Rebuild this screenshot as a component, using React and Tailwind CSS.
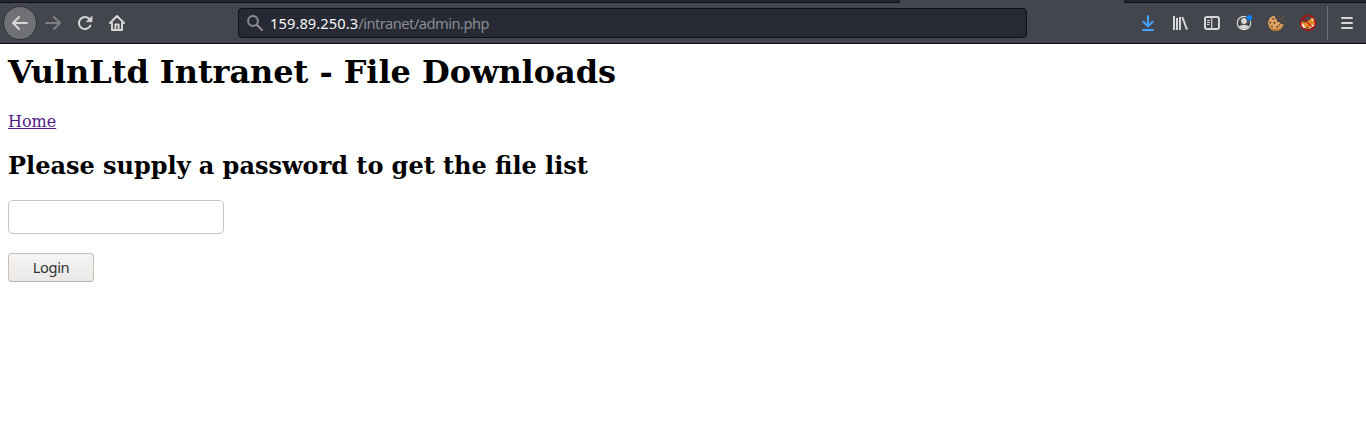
import React from "react";

function Icon({ children, className = "" }) {
  return (
    <svg
      viewBox="0 0 16 16"
      className={`block size-4 shrink-0 ${className}`}
      fill="none"
      stroke="currentColor"
      strokeWidth="2"
      strokeLinecap="round"
      strokeLinejoin="round"
      aria-hidden="true"
    >
      {children}
    </svg>
  );
}

function BackIcon() {
  return <Icon><path d="M15 8H1.5M7 2 1 8l6 6" /></Icon>;
}

function ForwardIcon() {
  return <Icon><path d="M1 8h13.5M9 2l6 6-6 6" /></Icon>;
}

function ReloadIcon() {
  return (
    <Icon>
      <path d="M12.6 4.2A6 6 0 1 0 13.4 10.6" />
      <path d="M15 1.5v5.2H9.8z" fill="currentColor" strokeWidth="0.8" />
    </Icon>
  );
}

function HomeIcon() {
  return (
    <Icon>
      <path d="M1 8l7-7 7 7M3 8v7h10V8" />
      <path d="M6.3 15V9.5h3.4V15" strokeWidth="1.8" />
      <path d="M8.4 12.2v.2" strokeWidth="1" />
    </Icon>
  );
}

function SearchIcon() {
  return (
    <Icon>
      <circle cx="6" cy="6" r="4.9" />
      <path d="M9.8 9.8 15 15" />
    </Icon>
  );
}

function DownloadIcon() {
  return (
    <Icon>
      <path d="M8 1v10M3.3 6.8 8 11.3l4.7-4.5M3 15h10" />
    </Icon>
  );
}

function LibraryIcon() {
  return (
    <Icon>
      <path d="M2 1v14M5 3v12M8 2v13" strokeWidth="2" strokeLinecap="butt" />
      <path d="M10.3 2 15 14.6" strokeWidth="2" strokeLinecap="butt" />
    </Icon>
  );
}

function SidebarIcon() {
  return (
    <Icon>
      <rect x="1" y="2" width="14" height="12" rx="2" />
      <path d="M7.7 2v12" strokeWidth="1.2" />
      <path d="M3 5.5h3M3 7.5h3M3 9.5h2.5" strokeWidth="1" strokeLinecap="butt" />
    </Icon>
  );
}

function AccountIcon() {
  return (
    <Icon>
      <circle cx="8" cy="8" r="6.7" strokeWidth="1.2" />
      <circle cx="8" cy="6" r="2.9" fill="currentColor" stroke="none" />
      <path d="M3 11.2q5-3 10 0A6 6 0 0 1 3 11.2Z" fill="currentColor" stroke="none" />
      <circle cx="13.3" cy="2.8" r="3.3" fill="#43464d" stroke="none" />
      <circle cx="13.4" cy="2.7" r="2.7" fill="#0a84ff" stroke="none" />
    </Icon>
  );
}

function CookieIcon() {
  return (
    <Icon>
      <g stroke="none">
        <path d="M6.8 .8C3 1.2 0 4.3 .2 8.5A7.5 7.5 0 0 0 15.5 9C14 10 12.1 9.4 11.9 7.5C9.7 7.7 8.2 6.3 8.7 4.3C7 4 6.2 2.4 6.8 .8Z" fill="#b87936" />
        <path d="M6.8 .8C3 1.2 0 4.3 .2 8.5Q1.5 14 7.5 14.3Q13 14.3 15.5 9C14 10 12.1 9.4 11.9 7.5C9.7 7.7 8.2 6.3 8.7 4.3C7 4 6.2 2.4 6.8 .8Z" fill="#dda463" />
        <g fill="#6b3e20">
          <circle cx="5.2" cy="4" r=".9" />
          <circle cx="2.3" cy="7.5" r=".9" />
          <circle cx="6.5" cy="7.8" r="1.1" />
          <circle cx="4" cy="11.3" r=".9" />
          <circle cx="9.3" cy="12" r="1" />
          <circle cx="11.3" cy="10" r=".8" />
        </g>
        <g fill="#805027">
          <rect x="10" y=".5" width="1.5" height="1.5" />
          <rect x="14" y="1" width="1.5" height="1.5" />
          <rect x="11.5" y="3.5" width="2" height="1.5" />
          <rect x="14.5" y="6.5" width="1.2" height="1" />
        </g>
      </g>
    </Icon>
  );
}

function FoxIcon() {
  return (
    <Icon>
      <g stroke="none">
        <path d="M1.5 6.2 5 7.5 9.5 5 11.5 2.8 14.5 3 15 9 12.5 12.5 8.5 14 4 13 1 10Z" fill="#e58a2b" />
        <path d="m1.3 8.5 2.7 1 1.5 3.5-2.500.1Q1 11 1.3 8.5ZM11 4l2.500-.5v3ZM11 10l4-.5q-1.500 3.200-5.500 4Z" fill="#f1e4cf" />
        <path d="m6.5 12.2 2.2-.4-.8 1.7Z" fill="#40352c" />
      </g>
      <circle cx="8" cy="8" r="7.4" stroke="#cc0000" strokeWidth="1.1" />
      <path d="m2.900 2.900 10.200 10.200" stroke="#cc0000" strokeWidth="1.1" />
    </Icon>
  );
}

function MenuIcon() {
  return (
    <Icon>
      <path d="M3 3h10M3 8h10M3 13h10" />
    </Icon>
  );
}

function TabStrip() {
  return (
    <div className="flex h-[3px] bg-[#43464d]">
      <div className="w-[900px] border-r border-b border-[#0f1116] bg-[#232631]" />
      <div className="w-[224px]" />
      <div className="flex-1 border-b border-l border-[#0f1116] bg-[#232631]" />
    </div>
  );
}

function Toolbar() {
  return (
    <nav className="flex h-[41px] border-b border-[#0c0c14] bg-[#43464d] text-[#d6d6d4]">
      <div className="flex h-10 w-[238px] shrink-0 items-center pl-[3px]">
        <button aria-label="Back" className="flex size-[34px] items-center justify-center rounded-full border border-[#2e3035] bg-[#707175]">
          <BackIcon />
        </button>
        <button aria-label="Forward" className="ml-2 text-[#7e8083]"><ForwardIcon /></button>
        <button aria-label="Reload" className="ml-4"><ReloadIcon /></button>
        <button aria-label="Home" className="ml-4"><HomeIcon /></button>
      </div>
      <div className="mt-[5px] flex h-[30px] w-[789px] shrink-0 items-center rounded-[4px] border border-[#0f1116] bg-[#272a35] pl-2 text-[#8b8d92]">
        <SearchIcon />
        <span className="ml-[7px] font-['Noto_Sans',sans-serif] text-[14.67px] leading-5 tracking-[-0.5px] whitespace-nowrap">
          <span className="tracking-[0.08px] text-[#f5f6f7]">159.89.250.3</span>/intranet/admin.php
        </span>
      </div>
      <div className="ml-auto flex h-10 items-center">
        <div className="flex gap-4 pr-[11px]">
          <button aria-label="Downloads" className="text-[#45a1ff]"><DownloadIcon /></button>
          <button aria-label="Library"><LibraryIcon /></button>
          <button aria-label="Sidebars"><SidebarIcon /></button>
          <button aria-label="Account"><AccountIcon /></button>
          <button aria-label="Cookies"><CookieIcon /></button>
          <button aria-label="Proxy off"><FoxIcon /></button>
        </div>
        <div className="h-[34px] w-px bg-[#707175]" />
        <button aria-label="Menu" className="mr-[11px] ml-[11px]"><MenuIcon /></button>
      </div>
    </nav>
  );
}

export default function App() {
  return (
    <div className="flex h-[428px] w-[1366px] flex-col overflow-hidden bg-white">
      <TabStrip />
      <Toolbar />
      <main className="flex flex-col items-start px-2 pt-[9px] font-['DejaVu_Serif',serif] text-black">
        <h1 className="text-[32px] leading-[38px] font-bold tracking-[-0.06px]">VulnLtd Intranet - File Downloads</h1>
        <a href="#home" className="mt-[21px] text-base leading-[19px] text-[#551a8b] underline">Home</a>
        <h2 className="mt-[21px] text-2xl leading-7 font-bold [word-spacing:-0.12px]">Please supply a password to get the file list</h2>
        <form className="mt-5 flex flex-col items-start" onSubmit={(e) => e.preventDefault()}>
          <input type="password" aria-label="Password" className="block h-[34px] w-[216px] rounded-[5px] border border-[#c8c4bf] bg-white px-2 outline-none" />
          <button className="mt-[19px] h-[29px] w-[86px] rounded-[4px] border border-[#c8c1ba] border-b-[#bdb5ad] bg-linear-to-b from-[#f6f5f4] to-[#eae8e6] pb-0.5 font-['Noto_Sans',sans-serif] text-[14.67px] leading-5 tracking-[-0.35px] text-[#2e3436]">
            Login
          </button>
        </form>
      </main>
    </div>
  );
}
